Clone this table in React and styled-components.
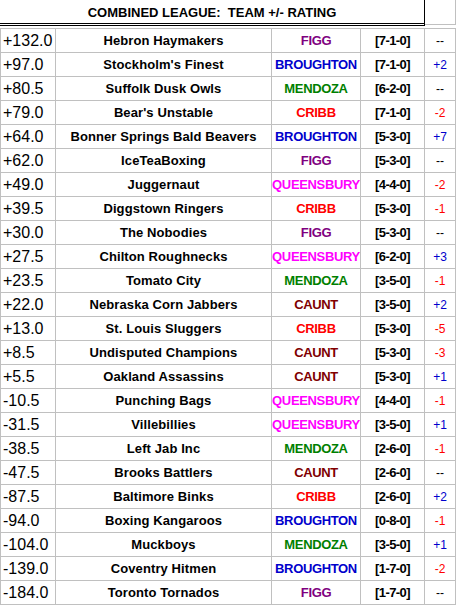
import styled, { createGlobalStyle } from 'styled-components';

const GlobalStyle = createGlobalStyle`
  html, body {
    margin: 0;
    padding: 0;
    background: #ffffff;
  }
  body {
    font-family: "Liberation Sans", Arial, sans-serif;
  }
`;

const trainerColors = {
  FIGG: '#800080',
  BROUGHTON: '#0000cc',
  MENDOZA: '#008000',
  CRIBB: '#ff0000',
  QUEENSBURY: '#ff00ff',
  CAUNT: '#800000',
};

const teams = [
  ['+132.0', 'Hebron Haymakers', 'FIGG', '[7-1-0]', '--'],
  ['+97.0', "Stockholm's Finest", 'BROUGHTON', '[7-1-0]', '+2'],
  ['+80.5', 'Suffolk Dusk Owls', 'MENDOZA', '[6-2-0]', '--'],
  ['+79.0', "Bear's Unstable", 'CRIBB', '[7-1-0]', '-2'],
  ['+64.0', 'Bonner Springs Bald Beavers', 'BROUGHTON', '[5-3-0]', '+7'],
  ['+62.0', 'IceTeaBoxing', 'FIGG', '[5-3-0]', '--'],
  ['+49.0', 'Juggernaut', 'QUEENSBURY', '[4-4-0]', '-2'],
  ['+39.5', 'Diggstown Ringers', 'CRIBB', '[5-3-0]', '-1'],
  ['+30.0', 'The Nobodies', 'FIGG', '[5-3-0]', '--'],
  ['+27.5', 'Chilton Roughnecks', 'QUEENSBURY', '[6-2-0]', '+3'],
  ['+23.5', 'Tomato City', 'MENDOZA', '[3-5-0]', '-1'],
  ['+22.0', 'Nebraska Corn Jabbers', 'CAUNT', '[3-5-0]', '+2'],
  ['+13.0', 'St. Louis Sluggers', 'CRIBB', '[5-3-0]', '-5'],
  ['+8.5', 'Undisputed Champions', 'CAUNT', '[5-3-0]', '-3'],
  ['+5.5', 'Oakland Assassins', 'CAUNT', '[5-3-0]', '+1'],
  ['-10.5', 'Punching Bags', 'QUEENSBURY', '[4-4-0]', '-1'],
  ['-31.5', 'Villebillies', 'QUEENSBURY', '[3-5-0]', '+1'],
  ['-38.5', 'Left Jab Inc', 'MENDOZA', '[2-6-0]', '-1'],
  ['-47.5', 'Brooks Battlers', 'CAUNT', '[2-6-0]', '--'],
  ['-87.5', 'Baltimore Binks', 'CRIBB', '[2-6-0]', '+2'],
  ['-94.0', 'Boxing Kangaroos', 'BROUGHTON', '[0-8-0]', '-1'],
  ['-104.0', 'Muckboys', 'MENDOZA', '[3-5-0]', '+1'],
  ['-139.0', 'Coventry Hitmen', 'BROUGHTON', '[1-7-0]', '-2'],
  ['-184.0', 'Toronto Tornados', 'FIGG', '[1-7-0]', '--'],
];

const Sheet = styled.div`
  width: 456px;
  display: flex;
  flex-direction: column;
`;

const HeaderRow = styled.div`
  display: grid;
  grid-template-columns: 425px 31px;
  height: 28px;
`;

const Title = styled.div`
  box-sizing: border-box;
  height: 26px;
  border-right: 1px solid #000;
  border-bottom: 3px double #000;
  display: flex;
  align-items: center;
  justify-content: center;
  padding-top: 1px;
  font-size: 13px;
  font-weight: bold;
  white-space: pre;
  color: #000;
`;

const HeaderSide = styled.div`
  box-sizing: border-box;
  height: 25px;
  border-right: 1px solid #c0c0c0;
  border-bottom: 1px solid #c0c0c0;
`;

const Row = styled.div`
  display: grid;
  grid-template-columns: 55px 216px 89px 64px 32px;
  height: 24px;
  box-sizing: border-box;
  border-top: 1px solid #c0c0c0;
  &:last-child {
    height: 25px;
    border-bottom: 1px solid #c0c0c0;
  }
`;

const Cell = styled.div`
  box-sizing: border-box;
  border-left: 1px solid #c0c0c0;
  display: flex;
  align-items: center;
  justify-content: ${p => (p.$left ? 'flex-start' : 'center')};
  white-space: nowrap;
  overflow: hidden;
  color: ${p => p.$color || '#000'};
  &:last-child {
    border-right: 1px solid #c0c0c0;
  }
`;

const Rating = styled(Cell)`
  padding-left: 2px;
  font-size: 16px;
`;

const Team = styled(Cell)`
  font-size: 13px;
  font-weight: bold;
  letter-spacing: 0.1px;
`;

const Trainer = styled(Cell)`
  font-size: 13px;
  font-weight: bold;
  letter-spacing: -0.35px;
`;

const Record = styled(Cell)`
  font-size: 13px;
  font-weight: bold;
  letter-spacing: -0.6px;
`;

const Change = styled(Cell)`
  font-size: 12px;
`;

function changeColor(c) {
  if (c.startsWith('+')) return '#0000cc';
  if (c.startsWith('-') && c !== '--') return '#ff0000';
  return '#000';
}

export default function App() {
  return (
    <>
      <GlobalStyle />
      <Sheet>
        <HeaderRow>
          <Title>{'COMBINED LEAGUE:  TEAM +/- RATING'}</Title>
          <HeaderSide />
        </HeaderRow>
        {teams.map(([rating, name, trainer, record, change]) => (
          <Row key={name}>
            <Rating $left>{rating}</Rating>
            <Team>{name}</Team>
            <Trainer $color={trainerColors[trainer]}>{trainer}</Trainer>
            <Record>{record}</Record>
            <Change $color={changeColor(change)}>{change}</Change>
          </Row>
        ))}
      </Sheet>
    </>
  );
}
